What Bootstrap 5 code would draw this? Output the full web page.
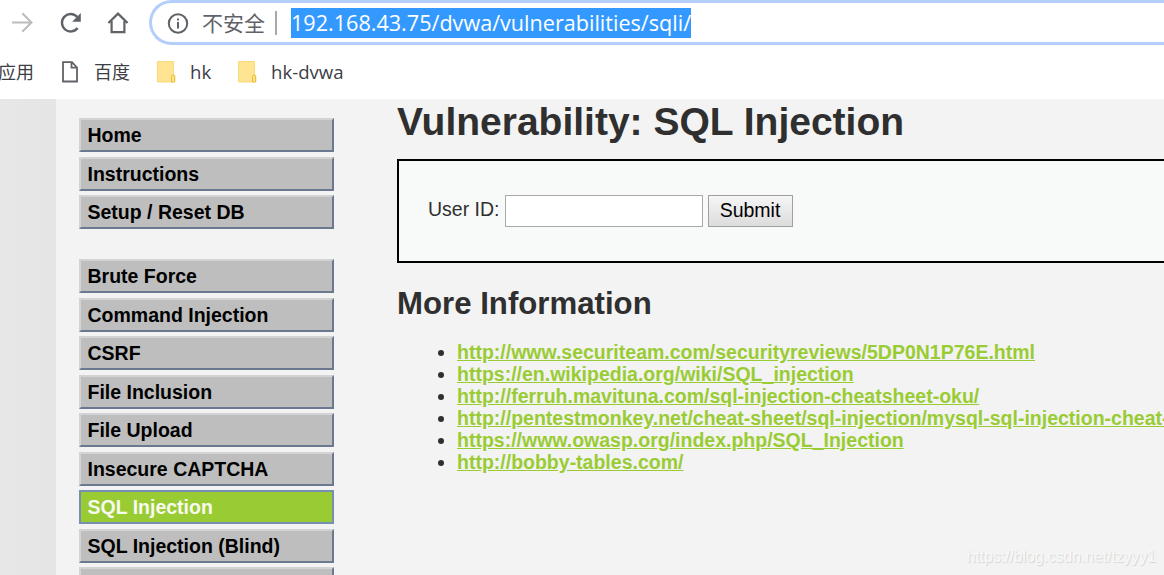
<!DOCTYPE html>
<html lang="en">
<head>
  <meta charset="UTF-8">
  <title>Vulnerability: SQL Injection</title>
  <meta name="viewport" content="width=device-width, initial-scale=1">
  <link href="https://cdn.jsdelivr.net/npm/bootstrap@5.3.3/dist/css/bootstrap.min.css" rel="stylesheet">
  <style>
    body {
      height: 575px;
      background: #fff;
      font-family: Arial, "Liberation Sans", sans-serif;
      font-size: 19.5px;
      line-height: 22px;
      color: #2f2f2f;
    }
    /* browser chrome */
    .browser-ui {
      font-family: "Open Sans", "Noto Sans CJK SC", sans-serif;
      color: #3c4043;
    }
    .toolbar {
      height: 45px;
    }
    .nav-icons {
      width: 149px;
      padding-left: 8px;
    }
    .omnibox {
      border: 3px solid #b3cefb;
      border-right: 0;
      border-radius: 23px 0 0 23px;
      padding-left: 14px;
    }
    .insecure {
      font-size: 21px;
      color: #5f6368;
      margin-left: 12px;
    }
    .omnibox-sep {
      width: 2px;
      height: 24px;
      background: #a6a8ab;
      margin: 0 14px 0 10px;
    }
    .url-selected {
      width: 400px;
      height: 30px;
      line-height: 30px;
      background: #3399ff;
      color: #fff;
      font-size: 21.6px;
    }
    .bookmarks {
      height: 54px;
      font-size: 18px;
    }
    .bookmark-latin { font-size: 18.6px; }
    .bookmark-apps { margin-left: -2px; width: 63px; }
    .bookmark-page { margin-left: 15px; width: 63px; }
    .bookmark-one { margin-left: 14px; width: 48px; }
    .bookmark-two { margin-left: 14px; }
    /* page */
    .gutter {
      width: 56px;
      background: linear-gradient(90deg, #e7e7e7, #e5e5e5);
    }
    .page-area {
      background: #f3f3f3;
    }
    .side-menu {
      width: 278px;
      padding: 19px 0 0 23px;
    }
    .menu-group {
      margin-bottom: 30px;
    }
    .menu-group a {
      display: block;
      height: 34px;
      margin-bottom: 4.5px;
      padding: 4px 0 0 6.5px;
      border: 2px solid;
      border-color: #d3d3d3 #6b7990 #6b7990 #d3d3d3;
      background: #bebebe;
      color: #000;
      font-weight: bold;
      text-decoration: none;
    }
    .menu-group a:last-child {
      margin-bottom: 0;
    }
    .menu-group a.selected {
      background: #9c3;
      border-color: #778fb3;
      color: #f8faf0;
    }
    .main-body {
      width: 767px;
      margin-left: 63px;
    }
    .main-body h1 {
      font-size: 39px;
      line-height: 44px;
      font-weight: bold;
      margin: 1px 0 15px;
    }
    .main-body h2 {
      font-size: 31.2px;
      line-height: 36px;
      font-weight: bold;
      margin: 23px 0 19px;
    }
    .vulnerable-box {
      height: 104px;
      border: 2px solid #000;
      border-right: 0;
      background: #f8faf9;
      padding: 34px 0 0 29px;
    }
    .id-label {
      padding-top: 3px;
    }
    .id-field {
      width: 198px;
      height: 32px;
      border: 1px solid #a9a9a9;
      background: #fff;
      margin: 0 5px;
    }
    .submit-btn {
      width: 85px;
      height: 32px;
      border: 1px solid #a0a0a0;
      border-radius: 0;
      background: linear-gradient(#f6f6f6, #dcdcdc);
      color: #000;
      padding: 0 0 2px;
    }
    .links {
      padding-left: 60px;
      white-space: nowrap;
    }
    .links a {
      color: #9c3;
      font-weight: bold;
    }
    .watermark {
      right: 8px;
      bottom: 7px;
      font-size: 15.7px;
      color: #f8f8f8;
      text-shadow: 1px 1px 1px #d4d4d4;
    }
  </style>
</head>
<body class="d-flex flex-column overflow-hidden position-relative">

  <!-- Browser toolbar -->
  <div class="browser-ui flex-shrink-0">
    <div class="toolbar d-flex">
      <div class="nav-icons d-flex align-items-center flex-shrink-0">
        <svg width="28" height="28" viewBox="0 0 28 28" fill="none" stroke="#babcbe" stroke-width="2"><path d="M4 13.5h19M14.3 4.3l9.2 9.2-9.2 9.2"/></svg>
        <svg class="ms-4" width="22" height="22" viewBox="0 0 22 22"><path d="M17.6 16A8.7 8.7 0 1 1 17.2 5" fill="none" stroke="#5f6368" stroke-width="2.4"/><path d="M20.8 1v8.7h-8.7z" fill="#5f6368"/></svg>
        <svg class="ms-4" width="24" height="24" viewBox="0 0 24 24" fill="none" stroke="#5f6368" stroke-width="2.2"><path d="M2.4 12L12 2.6 21.6 12M5.6 10v11.2h12.8V10"/></svg>
      </div>
      <div class="omnibox d-flex align-items-center flex-grow-1">
        <svg class="flex-shrink-0" width="24" height="24" viewBox="0 0 24 24"><circle cx="12" cy="12.5" r="9.2" fill="none" stroke="#5f6368" stroke-width="2"/><path d="M11 7.5h2v2h-2zM11 11h2v6.5h-2z" fill="#5f6368"/></svg>
        <span class="insecure text-nowrap">不安全</span>
        <span class="omnibox-sep"></span>
        <span class="url-selected text-nowrap">192.168.43.75/dvwa/vulnerabilities/sqli/</span>
      </div>
    </div>

    <!-- Bookmarks -->
    <div class="bookmarks d-flex align-items-center">
      <span class="bookmark-apps text-nowrap">应用</span>
      <svg width="18" height="22" viewBox="0 0 18 22" fill="none" stroke="#5f6368" stroke-width="1.8"><path d="M2 1.2h9l5 5.3v14H2zM10.5 1.5v5.2h5.2"/></svg>
      <span class="bookmark-page text-nowrap">百度</span>
      <svg width="19" height="22" viewBox="0 0 19 22"><path d="M.6.6h15.8v13.6h1.5v6.7H.6z" fill="#ffe592" stroke="#f8d775"/><path d="M14.5 21v-5.2q0-1.6 1.5-1.6t1.5 1.6V20q0 1-1 1z" fill="#ffe592" stroke="#e8bd38"/></svg>
      <span class="bookmark-latin bookmark-one">hk</span>
      <svg width="19" height="22" viewBox="0 0 19 22"><path d="M.6.6h15.8v13.6h1.5v6.7H.6z" fill="#ffe592" stroke="#f8d775"/><path d="M14.5 21v-5.2q0-1.6 1.5-1.6t1.5 1.6V20q0 1-1 1z" fill="#ffe592" stroke="#e8bd38"/></svg>
      <span class="bookmark-latin bookmark-two">hk-dvwa</span>
    </div>
  </div>

  <!-- Page -->
  <div class="d-flex flex-grow-1 overflow-hidden">
    <div class="gutter flex-shrink-0"></div>
    <div class="page-area d-flex flex-grow-1 overflow-hidden">
      <nav class="side-menu flex-shrink-0">
        <div class="menu-group">
          <a href="#">Home</a>
          <a href="#">Instructions</a>
          <a href="#">Setup / Reset DB</a>
        </div>
        <div class="menu-group">
          <a href="#">Brute Force</a>
          <a href="#">Command Injection</a>
          <a href="#">CSRF</a>
          <a href="#">File Inclusion</a>
          <a href="#">File Upload</a>
          <a href="#">Insecure CAPTCHA</a>
          <a href="#" class="selected">SQL Injection</a>
          <a href="#">SQL Injection (Blind)</a>
          <a href="#"></a>
        </div>
      </nav>

      <main class="main-body flex-shrink-0">
        <h1>Vulnerability: SQL Injection</h1>
        <form class="vulnerable-box d-flex align-items-start">
          <label for="user-id" class="id-label">User ID:</label>
          <input type="text" id="user-id" class="id-field">
          <button type="button" class="submit-btn">Submit</button>
        </form>
        <h2>More Information</h2>
        <ul class="links">
          <li><a href="#">http://www.securiteam.com/securityreviews/5DP0N1P76E.html</a></li>
          <li><a href="#">https://en.wikipedia.org/wiki/SQL_injection</a></li>
          <li><a href="#">http://ferruh.mavituna.com/sql-injection-cheatsheet-oku/</a></li>
          <li><a href="#">http://pentestmonkey.net/cheat-sheet/sql-injection/mysql-sql-injection-cheat-</a></li>
          <li><a href="#">https://www.owasp.org/index.php/SQL_Injection</a></li>
          <li><a href="#">http://bobby-tables.com/</a></li>
        </ul>
      </main>
    </div>
  </div>

  <div class="watermark position-absolute">https://blog.csdn.net/tzyyy1</div>

  <script src="https://cdn.jsdelivr.net/npm/bootstrap@5.3.3/dist/js/bootstrap.bundle.min.js"></script>
</body>
</html>
